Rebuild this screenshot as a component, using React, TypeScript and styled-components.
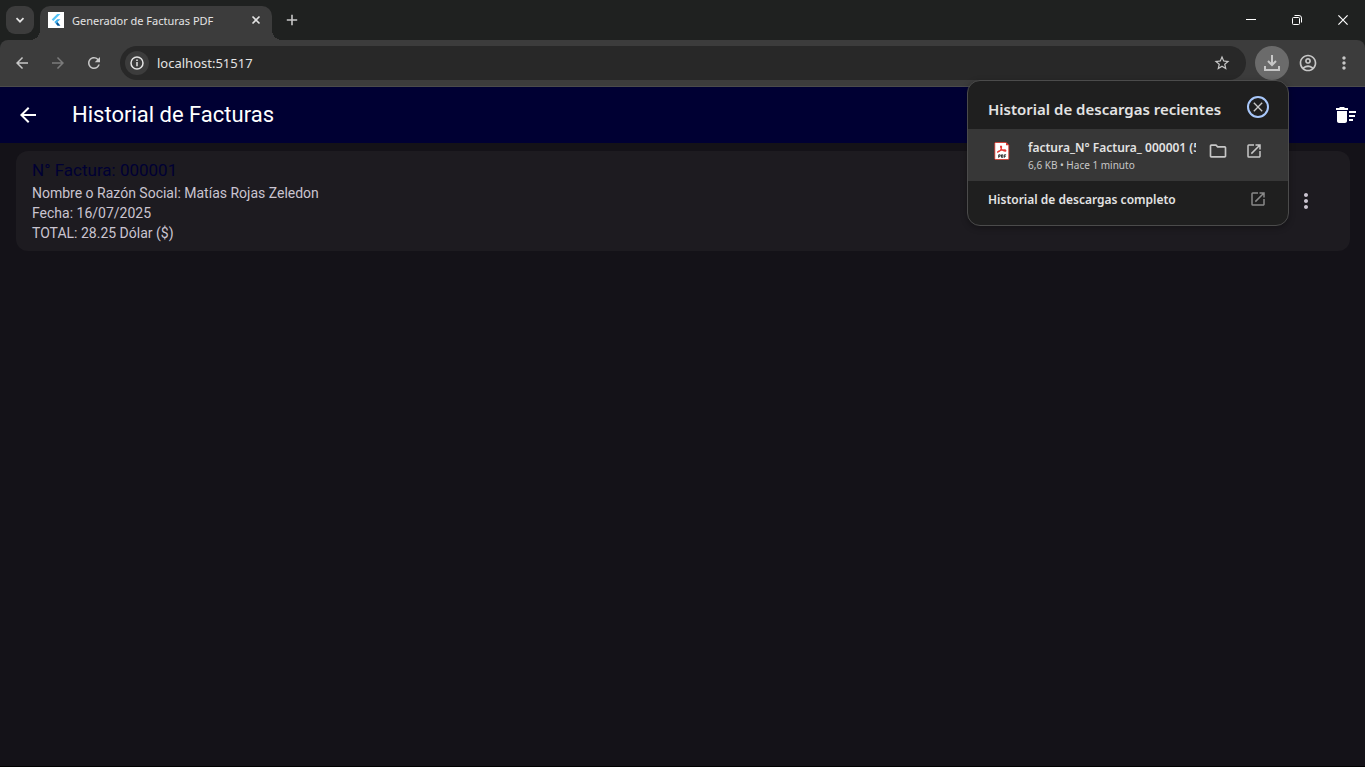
import React from "react";
import styled, { createGlobalStyle } from "styled-components";
import {
  MdArrowBack,
  MdArrowForward,
  MdClose,
  MdDeleteSweep,
  MdMoreVert,
  MdOpenInNew,
  MdOutlineAccountCircle,
  MdOutlineFolder,
  MdRefresh,
  MdStarBorder,
} from "react-icons/md";

const GlobalStyle = createGlobalStyle`
  *, *::before, *::after { box-sizing: border-box; }
  html, body, #root { height: 100%; }
  body { margin: 0; background: #141218; }
  h1, h2, h3, p { margin: 0; font-weight: 400; }
  button, input { font: inherit; }
  svg { display: block; flex: none; }
`;

const Window = styled.div`
  position: relative;
  display: flex;
  flex-direction: column;
  min-height: 100%;
  overflow: hidden;
  border-bottom: 1px solid #000;
  font-family: "Noto Sans", "Open Sans", sans-serif;
  color: #e3e3e3;
`;

const IconButton = styled.button<{ $size: number; $bg?: string; $color?: string; $radius?: string }>`
  display: flex;
  flex: none;
  align-items: center;
  justify-content: center;
  width: ${(p) => p.$size}px;
  height: ${(p) => p.$size}px;
  padding: 0;
  border: 0;
  border-radius: ${(p) => p.$radius ?? "50%"};
  background: ${(p) => p.$bg ?? "transparent"};
  color: ${(p) => p.$color ?? "#c7c7c7"};
`;

const TabStrip = styled.header`
  display: flex;
  align-items: flex-end;
  height: 40px;
  padding-left: 6px;
  background: #1f2120;
`;

const TabSearch = styled.div`
  align-self: center;
  margin-right: 6px;
`;

const Tab = styled.div`
  position: relative;
  display: flex;
  align-items: center;
  gap: 8px;
  width: 232px;
  height: 34px;
  padding: 0 6px 6px 8px;
  border-radius: 10px 10px 0 0;
  background: #3c3c3c;
  font-size: 11px;
  line-height: 16px;

  &::before,
  &::after {
    content: "";
    position: absolute;
    bottom: 0;
    width: 10px;
    height: 10px;
  }
  &::before {
    right: 100%;
    background: radial-gradient(circle at 0 0, transparent 10px, #3c3c3c 10px);
  }
  &::after {
    left: 100%;
    background: radial-gradient(circle at 100% 0, transparent 10px, #3c3c3c 10px);
  }
`;

const TabTitle = styled.span`
  flex: 1;
  padding-top: 2px;
  white-space: nowrap;
`;

const NewTab = styled.div`
  align-self: center;
  margin-left: 6px;
`;

const WindowControls = styled.div`
  display: flex;
  align-self: stretch;
  margin-left: auto;
`;

const WindowButton = styled.button`
  display: flex;
  align-items: center;
  justify-content: center;
  width: 46px;
  padding: 0 0 0 2px;
  border: 0;
  background: transparent;
  color: #fff;
`;

const ToolbarBack = styled.div`
  background: #1f2120;
`;

const Toolbar = styled.div`
  display: flex;
  align-items: center;
  gap: 2px;
  height: 47px;
  padding: 0 4px 1px 5px;
  border-bottom: 1px solid #4b4b4b;
  border-radius: 8px 8px 0 0;
  background: #3c3c3c;
`;

const AddressBar = styled.div`
  display: flex;
  flex: 1;
  align-items: center;
  height: 34px;
  margin: 0 7px;
  padding: 0 7px 0 5px;
  border-radius: 17px;
  background: #282828;
`;

const AddressInput = styled.input`
  flex: 1;
  min-width: 0;
  margin: 0;
  padding: 0 8px;
  border: 0;
  outline: 0;
  background: transparent;
  color: #e3e3e3;
  font-size: 13px;
  line-height: 20px;
`;

const Page = styled.main`
  flex: 1;
  background: #141218;
  font-family: Roboto, sans-serif;
`;

const AppBar = styled.div`
  display: flex;
  align-items: center;
  height: 56px;
  padding: 0 0 0 8px;
  background: #000033;
`;

const AppTitle = styled.h1`
  flex: 1;
  margin-left: 24px;
  color: #fff;
  font-size: 22px;
  line-height: 28px;
`;

const InvoiceCard = styled.article`
  display: flex;
  align-items: center;
  margin: 8px 15px 8px 16px;
  padding: 8px 24px 8px 16px;
  border-radius: 12px;
  background: #1d1b20;
`;

const InvoiceText = styled.div`
  flex: 1;
`;

const InvoiceNumber = styled.h2`
  padding-bottom: 2px;
  color: #000033;
  font-size: 17px;
  line-height: 22px;
`;

const InvoiceLine = styled.p`
  color: #cac4d0;
  font-size: 14px;
  line-height: 20px;
`;

const Downloads = styled.section`
  position: absolute;
  top: 80px;
  right: 76px;
  width: 322px;
  overflow: hidden;
  border: 1px solid #4b4b4b;
  border-radius: 13px;
  background: #1f1f1f;
  box-shadow: 0 2px 6px rgba(0, 0, 0, 0.3);
`;

const DownloadsHeader = styled.div`
  display: flex;
  align-items: center;
  justify-content: space-between;
  height: 48px;
  padding: 4px 19px 0 20px;
`;

const DownloadsTitle = styled.h2`
  padding-top: 4px;
  font-size: 15px;
  font-weight: 600;
  line-height: 20px;
  white-space: nowrap;
`;

const CloseButton = styled.button`
  display: flex;
  align-items: center;
  justify-content: center;
  width: 22px;
  height: 22px;
  padding: 0;
  border: 2px solid #a8c7fa;
  border-radius: 50%;
  background: transparent;
  color: #c7c7c7;
`;

const DownloadRow = styled.div`
  display: flex;
  align-items: flex-start;
  height: 52px;
  padding: 4px 16px 0 24px;
  background: #373737;
`;

const FileType = styled.div`
  display: flex;
  align-items: center;
  height: 36px;
`;

const FileInfo = styled.div`
  flex: 1;
  min-width: 0;
  margin: 0 4px 0 16px;
  padding-top: 6px;
`;

const FileName = styled.h3`
  overflow: hidden;
  font-size: 12px;
  font-weight: 600;
  line-height: 18px;
  white-space: nowrap;
`;

const FileMeta = styled.p`
  color: #c7c7c7;
  font-size: 10px;
  line-height: 16px;
`;

const RowActions = styled.div`
  display: flex;
`;

const FullHistory = styled.a`
  display: flex;
  align-items: center;
  justify-content: space-between;
  height: 44px;
  padding: 0 21px 8px 20px;
  color: #e3e3e3;
  font-size: 12px;
  font-weight: 600;
  line-height: 16px;
  text-decoration: none;

  svg { color: #8a8a8a; }
`;

const FullHistoryLabel = styled.span`
  padding-top: 2px;
`;

const FlutterLogo = () => (
  <svg width="16" height="16" viewBox="0 0 16 16" aria-hidden="true">
    <rect width="16" height="16" fill="#fff" />
    <path d="M9.2 2h3.2L5.3 9 3.7 7.5z" fill="#54c5f8" />
    <path d="M9.2 7.2h3.2L9.5 10.1l-1.6 1.6-1.6-1.6z" fill="#40b0ee" />
    <path d="M7.9 11.7l1.6-1.6 2.9 3.7H9.6z" fill="#01579b" />
  </svg>
);

const DownloadIcon = () => (
  <svg width="18" height="18" viewBox="0 0 18 18" fill="none" stroke="currentColor" strokeWidth="2" aria-hidden="true">
    <path d="M9 1v9.5M5 7l4 4 4-4M2 12v4h14v-4" />
  </svg>
);

const InfoIcon = () => (
  <svg width="14" height="14" viewBox="0 0 14 14" fill="none" stroke="currentColor" strokeWidth="1.5" aria-hidden="true">
    <circle cx="7" cy="7" r="6" />
    <path d="M7 6v4.3M7 3.6v1.5" />
  </svg>
);

const PdfIcon = () => (
  <svg width="20" height="20" viewBox="0 0 20 20" aria-hidden="true">
    <path d="M3.5 1.5h10.5l2.8 2.8v13.5a.7.7 0 0 1-.7.7H3.5a.7.7 0 0 1-.7-.7V2.2a.7.7 0 0 1 .7-.7z" fill="#fff" stroke="#d93025" strokeWidth=".8" />
    <path d="M14 1.5v2.8h2.8z" fill="#d93025" />
    <path
      d="M6 11c2.3-.9 3.5-3.4 3.6-5 .1-1.300-1.400-1.200-1 .2.5 2 2.400 3.800 4.400 4 1.300.1 1.100-1.300-.4-1.300-2.200 0-4.600.6-6.200 1.400-1.300.7-1 1.200-.4.7z"
      fill="none"
      stroke="#e53935"
      strokeWidth="1.2"
    />
    <path d="M6.7 16.8v-3h1.5v1.5H6.7M9.5 13.8v2.6h1.3v-2.6zM12.3 16.8v-3h1.8M12.3 15.3h1.5" fill="none" stroke="#222" strokeWidth=".9" />
  </svg>
);

export default function App() {
  return (
    <>
      <GlobalStyle />
      <Window>
        <TabStrip>
          <TabSearch>
            <IconButton $size={28} $bg="#3c3c3c" $color="#e3e3e3" $radius="9px" aria-label="Buscar pestañas">
              <svg width="10" height="10" viewBox="0 0 10 10" fill="none" stroke="currentColor" strokeWidth="1.7">
                <path d="M1.5 3.2L5 6.7l3.5-3.5" />
              </svg>
            </IconButton>
          </TabSearch>
          <Tab>
            <FlutterLogo />
            <TabTitle>Generador de Facturas PDF</TabTitle>
            <IconButton $size={20} $color="#e3e3e3" aria-label="Cerrar pestaña">
              <svg width="10" height="10" viewBox="0 0 10 10" stroke="currentColor" strokeWidth="1.6">
                <path d="M1.5 1.5l7 7M8.5 1.5l-7 7" />
              </svg>
            </IconButton>
          </Tab>
          <NewTab>
            <IconButton $size={28} aria-label="Nueva pestaña">
              <svg width="12" height="12" viewBox="0 0 12 12" stroke="currentColor" strokeWidth="1.6">
                <path d="M6 .8v10.4M.8 6h10.4" />
              </svg>
            </IconButton>
          </NewTab>
          <WindowControls>
            <WindowButton aria-label="Minimizar">
              <svg width="10" height="10" viewBox="0 0 10 10" stroke="currentColor">
                <path d="M0 4.5h10" />
              </svg>
            </WindowButton>
            <WindowButton aria-label="Restaurar">
              <svg width="10" height="10" viewBox="0 0 10 10" fill="none" stroke="currentColor">
                <rect x=".5" y="2.5" width="7" height="7" rx="1" />
                <path d="M2.5.5H7a2.5 2.5 0 0 1 2.5 2.5v4.5" />
              </svg>
            </WindowButton>
            <WindowButton aria-label="Cerrar">
              <svg width="10" height="10" viewBox="0 0 10 10" stroke="currentColor" strokeWidth="1.2">
                <path d="M.4.4l9.2 9.2M9.6.4L.4 9.6" />
              </svg>
            </WindowButton>
          </WindowControls>
        </TabStrip>

        <ToolbarBack>
          <Toolbar>
            <IconButton $size={34} aria-label="Atrás"><MdArrowBack size={18} /></IconButton>
            <IconButton $size={34} $color="#7b7b7b" aria-label="Adelante"><MdArrowForward size={18} /></IconButton>
            <IconButton $size={34} aria-label="Recargar"><MdRefresh size={18} /></IconButton>
            <AddressBar>
              <IconButton $size={24} $bg="#3c3c3c" $color="#e3e3e3" aria-label="Información del sitio">
                <InfoIcon />
              </IconButton>
              <AddressInput aria-label="Dirección" defaultValue="localhost:51517" />
              <IconButton $size={34} aria-label="Añadir a favoritos"><MdStarBorder size={18} /></IconButton>
            </AddressBar>
            <IconButton $size={34} $bg="#6b6b6b" aria-label="Descargas"><DownloadIcon /></IconButton>
            <IconButton $size={34} aria-label="Perfil"><MdOutlineAccountCircle size={20} /></IconButton>
            <IconButton $size={34} aria-label="Menú"><MdMoreVert size={20} /></IconButton>
          </Toolbar>
        </ToolbarBack>

        <Page>
          <AppBar>
            <IconButton $size={40} $color="#fff" aria-label="Volver"><MdArrowBack size={24} /></IconButton>
            <AppTitle>Historial de Facturas</AppTitle>
            <IconButton $size={38} $color="#fff" aria-label="Eliminar historial"><MdDeleteSweep size={24} /></IconButton>
          </AppBar>
          <InvoiceCard>
            <InvoiceText>
              <InvoiceNumber>N° Factura: 000001</InvoiceNumber>
              <InvoiceLine>Nombre o Razón Social: Matías Rojas Zeledon</InvoiceLine>
              <InvoiceLine>Fecha: 16/07/2025</InvoiceLine>
              <InvoiceLine>TOTAL: 28.25 Dólar ($)</InvoiceLine>
            </InvoiceText>
            <IconButton $size={40} $color="#cac4d0" aria-label="Opciones de factura"><MdMoreVert size={24} /></IconButton>
          </InvoiceCard>
        </Page>

        <Downloads aria-label="Descargas recientes">
          <DownloadsHeader>
            <DownloadsTitle>Historial de descargas recientes</DownloadsTitle>
            <CloseButton aria-label="Cerrar descargas"><MdClose size={16} /></CloseButton>
          </DownloadsHeader>
          <DownloadRow>
            <FileType>
              <PdfIcon />
            </FileType>
            <FileInfo>
              <FileName>factura_N° Factura_ 000001 (5).pdf</FileName>
              <FileMeta>6,6 KB • Hace 1 minuto</FileMeta>
            </FileInfo>
            <RowActions>
              <IconButton $size={36} aria-label="Mostrar en carpeta"><MdOutlineFolder size={20} /></IconButton>
              <IconButton $size={36} aria-label="Abrir archivo"><MdOpenInNew size={18} /></IconButton>
            </RowActions>
          </DownloadRow>
          <FullHistory href="#descargas">
            <FullHistoryLabel>Historial de descargas completo</FullHistoryLabel>
            <MdOpenInNew size={18} />
          </FullHistory>
        </Downloads>
      </Window>
    </>
  );
}
